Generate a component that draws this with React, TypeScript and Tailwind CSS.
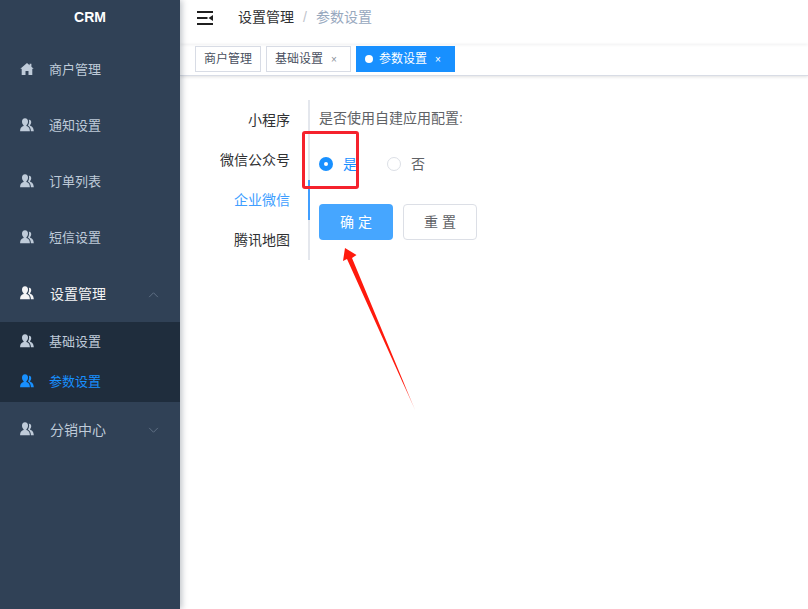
import React from "react";

const font = { fontFamily: '"Liberation Sans", "Noto Sans CJK SC", sans-serif' };

function Home({ className }: { className: string }) {
  return (
    <svg viewBox="0 0 14 12" className={className} fill="currentColor">
      <path d="M7 0 L9.6 2.2 L9.6 0.8 L11.4 0.8 L11.4 3.7 L13.7 5.8 L12.3 5.8 L12.3 12 L8.5 12 L8.5 8 L5.5 8 L5.5 12 L1.7 12 L1.7 5.8 L0.3 5.8 Z" />
    </svg>
  );
}

function Users({ className }: { className: string }) {
  return (
    <svg viewBox="0 0 14 14" className={className} fill="currentColor">
      <path d="M5 0.3 C7 0.3 8 1.8 8 3.6 C8 5.2 7.3 6.5 6.4 7.2 L6.4 8 C8.2 8.5 9.8 9.6 9.9 13.2 L0.1 13.2 C0.2 9.6 1.8 8.5 3.6 8 L3.6 7.2 C2.7 6.5 2 5.2 2 3.6 C2 1.8 3 0.3 5 0.3 Z" />
      <path d="M9.2 1.8 C10.8 2 11.3 3.3 11.2 4.6 C11.1 5.7 10.6 6.6 10.1 7 L10.1 7.8 C11.9 8.3 13.6 9.5 13.8 13.2 L10.9 13.2 C10.8 10.4 9.8 8.7 7.9 7.6 C8.7 6.6 9.1 5.3 9.1 3.8 C9.1 3.1 9.1 2.4 8.8 1.8 Z" />
    </svg>
  );
}

function Chevron({ up }: { up?: boolean }) {
  return (
    <svg viewBox="0 0 12 8" className="w-[11px] h-[7px] text-[#66768a]" fill="none" stroke="currentColor" strokeWidth="1">
      <path d={up ? "M1 7 L6 2 L11 7" : "M1 1 L6 6 L11 1"} />
    </svg>
  );
}

function MenuItem({ label, home }: { label: string; home?: boolean }) {
  return (
    <div className="h-14 flex items-center pl-5 text-[13px] text-[#bfcbd9]">
      {home ? <Home className="w-[14px] h-[12px] mb-[2px] mr-[15px] text-[#bfcbd9]" /> : <Users className="w-[14px] h-[14px] mb-[2px] mr-[15px] text-[#bfcbd9]" />}
      <span>{label}</span>
    </div>
  );
}

function SubItem({ label, active }: { label: string; active?: boolean }) {
  return (
    <div className={`h-10 flex items-center pl-5 text-[13px] ${active ? "text-[#1890ff]" : "text-[#bfcbd9]"}`}>
      <Users className={`w-[14px] h-[14px] mb-[2px] mr-[15px] ${active ? "text-[#1890ff]" : "text-[#bfcbd9]"}`} />
      <span>{label}</span>
    </div>
  );
}

function GroupItem({ label, up, active }: { label: string; up?: boolean; active?: boolean }) {
  return (
    <div className={`h-14 flex items-center pl-5 pr-[21px] text-[14px] ${active ? "text-[#f4f4f5]" : "text-[#bfcbd9]"}`}>
      <Users className={`w-[14px] h-[14px] mb-[2px] mr-4 ${active ? "text-[#f4f4f5]" : "text-[#bfcbd9]"}`} />
      <span className="flex-1 pt-px">{label}</span>
      <Chevron up={up} />
    </div>
  );
}

function SideTab({ label, active }: { label: string; active?: boolean }) {
  return (
    <div className={`h-10 flex items-center justify-end pr-[18px] text-[14px] ${active ? "text-[#409eff]" : "text-[#303133]"}`}>
      {label}
    </div>
  );
}

export default function App() {
  return (
    <div className="relative w-[808px] h-[609px] flex overflow-hidden bg-white" style={font}>
      <aside className="w-[180px] h-full bg-[#304156] shrink-0 shadow-[2px_0_6px_rgba(0,21,41,0.25)] z-10">
        <div className="h-[42px] pb-2 flex items-center justify-center text-[14px] font-bold text-white">CRM</div>
        <MenuItem label="商户管理" home />
        <MenuItem label="通知设置" />
        <MenuItem label="订单列表" />
        <MenuItem label="短信设置" />
        <GroupItem label="设置管理" up active />
        <div className="bg-[#1f2d3d]">
          <SubItem label="基础设置" />
          <SubItem label="参数设置" active />
        </div>
        <GroupItem label="分销中心" />
      </aside>

      <main className="flex-1 flex flex-col min-w-0">
        <header className="h-[44px] pb-[9px] flex items-center pl-[17px] shadow-[0_1px_3px_rgba(0,21,41,0.06)]">
          <svg viewBox="0 0 16 14" className="w-4 h-[14px] text-[#1f1f1f] mr-[25px]" fill="currentColor">
            <rect x="0" y="0" width="16" height="2" />
            <rect x="0" y="6" width="10.5" height="2" />
            <rect x="0" y="12" width="16" height="2" />
            <path d="M16 4 L16 10 L11.5 7 Z" />
          </svg>
          <span className="text-[14px] text-[#303133]">设置管理</span>
          <span className="text-[14px] text-[#c0c4cc] mx-[9px]">/</span>
          <span className="text-[14px] text-[#97a8be]">参数设置</span>
        </header>

        <nav className="h-[32px] flex items-start gap-[5px] pl-[15px] pt-[2px] border-b border-[#d8dce5] shadow-[0_1px_3px_rgba(0,0,0,0.12)]">
          <div className="h-[26px] px-2 flex items-center border border-[#d8dce5] text-[12px] text-[#495060]">商户管理</div>
          <div className="h-[26px] pl-2 pr-[13px] flex items-center border border-[#d8dce5] text-[12px] text-[#495060]">
            基础设置<span className="ml-[8px] text-[10px] text-[#8a8f99]">×</span>
          </div>
          <div className="h-[26px] w-[99px] pl-[9px] flex items-center bg-[#1890ff] text-[12px] text-white">
            <span className="w-2 h-2 rounded-full bg-white mr-[6px]" />
            参数设置<span className="ml-[8px] text-[10px]">×</span>
          </div>
        </nav>

        <section className="flex pt-6">
          <div className="relative w-[130px] h-40 shrink-0 border-r-2 border-[#e4e7ed]">
            <SideTab label="小程序" />
            <SideTab label="微信公众号" />
            <SideTab label="企业微信" active />
            <SideTab label="腾讯地图" />
            <div className="absolute right-[-2px] top-20 w-[2px] h-10 bg-[#409eff]" />
          </div>
          <div className="pl-[9px]">
            <div className="h-9 pt-[1px] flex items-center text-[14px] text-[#606266]">是否使用自建应用配置:</div>
            <div className="h-[56px] flex items-center">
              <span className="w-[14px] h-[14px] rounded-full bg-[#1890ff] flex items-center justify-center mr-[10px]">
                <span className="w-1 h-1 rounded-full bg-white" />
              </span>
              <span className="text-[14px] text-[#1890ff] mr-[30px]">是</span>
              <span className="w-[14px] h-[14px] rounded-full border border-[#dcdfe6] bg-white mr-[10px]" />
              <span className="text-[14px] text-[#606266]">否</span>
            </div>
            <div className="flex gap-[10px] mt-[12px]">
              <button className="w-[74px] h-9 pl-1 rounded bg-[#46a6ff] text-white text-[14px] tracking-[4px]">确定</button>
              <button className="w-[74px] h-9 pl-1 rounded border border-[#dcdfe6] bg-white text-[#606266] text-[14px] tracking-[4px]">重置</button>
            </div>
          </div>
        </section>
      </main>

      <div className="absolute left-[302px] top-[131px] w-[57px] h-[58px] border-[3px] border-[#f5222d] rounded-[3px] z-20" />
      <svg className="absolute left-[340px] top-[245px] w-[80px] h-[170px] z-20" viewBox="0 0 80 170">
        <defs>
          <linearGradient id="fade" x1="0" y1="0" x2="0" y2="1">
            <stop offset="0.82" stopColor="#ff1a0d" />
            <stop offset="1" stopColor="#ff1a0d" stopOpacity="0.3" />
          </linearGradient>
        </defs>
        <path d="M5 3 L16.5 10 L12 13 L75.5 166 L7 14 L3 16 Z" fill="url(#fade)" />
      </svg>
    </div>
  );
}
